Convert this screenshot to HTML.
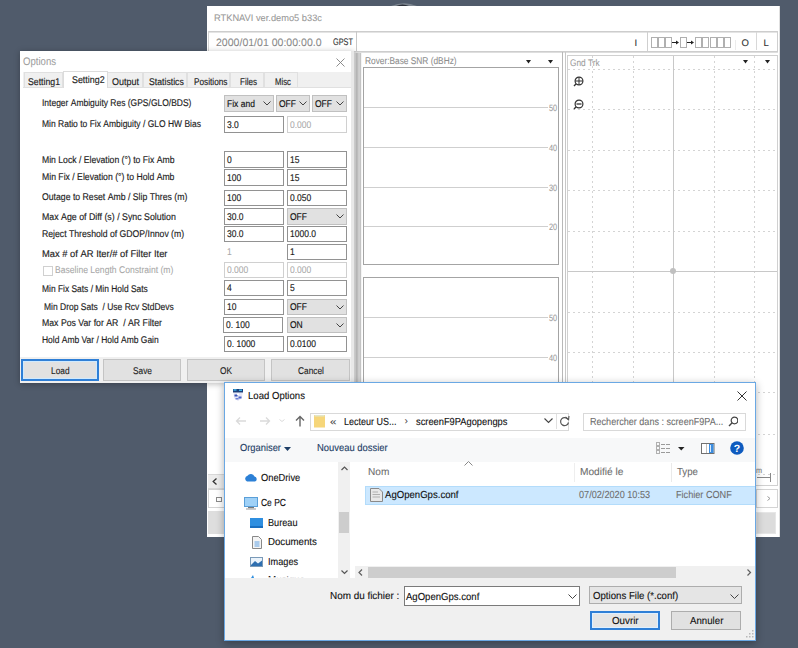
<!DOCTYPE html>
<html><head><meta charset="utf-8"><style>
html,body{margin:0;padding:0;}
body{width:798px;height:648px;overflow:hidden;position:relative;background:#505b6b;font-family:"Liberation Sans",sans-serif;text-rendering:geometricPrecision;}
body>div,body>svg{position:absolute;}
.t{white-space:nowrap;}
</style></head><body>
<div style="left:207px;top:6px;width:573px;height:531px;background:#ffffff;"></div>
<svg style="left:390px;top:1.3px;" width="28" height="5" viewBox="0 0 28 5"><path d="M1 5 Q14 -0.5 27 5Z" fill="#7d8690"/><path d="M6 5 Q12.5 1.8 19 5Z" fill="#2b303a"/></svg>
<div class="t" style="left:214px;top:14.33px;font-size:9.3px;line-height:9.3px;color:#999;transform:scaleX(0.9981);transform-origin:0 0;-webkit-text-stroke:0.08px #999;">RTKNAVI&nbsp;ver.demo5&nbsp;b33c</div>
<div style="left:208px;top:31px;width:570px;height:1px;background:#cdcdcd;"></div>
<div style="left:208px;top:32px;width:570px;height:1px;background:#e4e4e4;"></div>
<div style="left:208px;top:51px;width:570px;height:1px;background:#cdcdcd;"></div>
<div style="left:208px;top:52px;width:570px;height:1px;background:#dedede;"></div>
<div style="left:208px;top:31px;width:1px;height:20px;background:#d4d4d4;"></div>
<div style="left:356px;top:31px;width:1px;height:20px;background:#c8c8c8;"></div>
<div class="t" style="left:216px;top:38.23px;font-size:10.6px;line-height:10.6px;color:#8a8a8a;transform:scaleX(0.9953);transform-origin:0 0;-webkit-text-stroke:0.08px #8a8a8a;">2000/01/01&nbsp;00:00:00.0</div>
<div class="t" style="left:332.7px;top:38.16px;font-size:9.5px;line-height:9.5px;color:#333;transform:scaleX(0.7732);transform-origin:0 0;-webkit-text-stroke:0.12px #333;">GPST</div>
<div style="left:647px;top:31px;width:1px;height:20px;background:#cfcfcf;"></div>
<div style="left:777px;top:31px;width:1px;height:20px;background:#cfcfcf;"></div>
<div class="t" style="left:634.5px;top:38.66px;font-size:9.5px;line-height:9.5px;color:#333;-webkit-text-stroke:0.12px #333;font-family:"Liberation Mono";">I</div>
<svg style="left:651px;top:37px;" width="82" height="12" viewBox="0 0 82 12"><rect x="0.5" y="0.5" width="6" height="10" fill="none" stroke="#b0b0b0" stroke-width="1"/><rect x="7.5" y="0.5" width="6" height="10" fill="none" stroke="#b0b0b0" stroke-width="1"/><rect x="14.5" y="0.5" width="6" height="10" fill="none" stroke="#b0b0b0" stroke-width="1"/><path d="M21 5.5 H27" stroke="#222" stroke-width="1"/><path d="M25 3.5 L28 5.5 L25 7.5Z" fill="#222"/><rect x="29.5" y="0.5" width="6" height="10" fill="none" stroke="#b0b0b0" stroke-width="1"/><path d="M36 5.5 H42" stroke="#222" stroke-width="1"/><path d="M40 3.5 L43 5.5 L40 7.5Z" fill="#222"/><rect x="44.5" y="0.5" width="6" height="10" fill="none" stroke="#b0b0b0" stroke-width="1"/><rect x="51.5" y="0.5" width="6" height="10" fill="none" stroke="#b0b0b0" stroke-width="1"/><rect x="59.5" y="0.5" width="6" height="10" fill="none" stroke="#b0b0b0" stroke-width="1"/><rect x="66.5" y="0.5" width="6" height="10" fill="none" stroke="#b0b0b0" stroke-width="1"/><rect x="73.5" y="0.5" width="6" height="10" fill="none" stroke="#b0b0b0" stroke-width="1"/></svg>
<div style="left:735px;top:40px;width:1px;height:10px;background:#ececec;"></div>
<div style="left:756px;top:32px;width:1px;height:18px;background:#d8d8d8;"></div>
<div class="t" style="left:741.5px;top:38.66px;font-size:9.5px;line-height:9.5px;color:#333;-webkit-text-stroke:0.12px #333;">O</div>
<div class="t" style="left:763.5px;top:38.66px;font-size:9.5px;line-height:9.5px;color:#333;-webkit-text-stroke:0.12px #333;">L</div>
<div style="left:562px;top:52px;width:1px;height:485px;background:#b8b8b8;"></div>
<div style="left:565px;top:52px;width:1px;height:485px;background:#c8c8c8;"></div>
<div class="t" style="left:365px;top:56.90px;font-size:9.8px;line-height:9.8px;color:#8c8c8c;transform:scaleX(0.8495);transform-origin:0 0;-webkit-text-stroke:0.08px #8c8c8c;">Rover:Base&nbsp;SNR&nbsp;(dBHz)</div>
<svg style="left:526px;top:59.5px;" width="6" height="4" viewBox="0 0 6 4"><path d="M0 0 H5 L2.5 3.5Z" fill="#222"/></svg>
<svg style="left:548px;top:59.5px;" width="6" height="4" viewBox="0 0 6 4"><path d="M0 0 H5 L2.5 3.5Z" fill="#222"/></svg>
<div style="left:363px;top:67px;width:196px;height:198px;border:1px solid #a4a4a4;box-sizing:border-box;"></div>
<div style="left:364px;top:107px;width:184px;height:1px;background:#cfcfcf;"></div>
<div class="t" style="left:548.5px;top:104.41px;font-size:9.2px;line-height:9.2px;color:#9a9a9a;transform:scaleX(0.8013);transform-origin:0 0;-webkit-text-stroke:0.08px #9a9a9a;">50</div>
<div style="left:364px;top:147px;width:184px;height:1px;background:#cfcfcf;"></div>
<div class="t" style="left:548.5px;top:144.41px;font-size:9.2px;line-height:9.2px;color:#9a9a9a;transform:scaleX(0.8013);transform-origin:0 0;-webkit-text-stroke:0.08px #9a9a9a;">40</div>
<div style="left:364px;top:187px;width:184px;height:1px;background:#cfcfcf;"></div>
<div class="t" style="left:548.5px;top:184.41px;font-size:9.2px;line-height:9.2px;color:#9a9a9a;transform:scaleX(0.8013);transform-origin:0 0;-webkit-text-stroke:0.08px #9a9a9a;">30</div>
<div style="left:364px;top:226px;width:184px;height:1px;background:#cfcfcf;"></div>
<div class="t" style="left:548.5px;top:223.41px;font-size:9.2px;line-height:9.2px;color:#9a9a9a;transform:scaleX(0.8013);transform-origin:0 0;-webkit-text-stroke:0.08px #9a9a9a;">20</div>
<div style="left:363px;top:277px;width:196px;height:143px;border:1px solid #a4a4a4;box-sizing:border-box;"></div>
<div style="left:364px;top:317px;width:184px;height:1px;background:#cfcfcf;"></div>
<div class="t" style="left:548.5px;top:314.41px;font-size:9.2px;line-height:9.2px;color:#9a9a9a;transform:scaleX(0.8013);transform-origin:0 0;-webkit-text-stroke:0.08px #9a9a9a;">50</div>
<div style="left:364px;top:357px;width:184px;height:1px;background:#cfcfcf;"></div>
<div class="t" style="left:548.5px;top:354.41px;font-size:9.2px;line-height:9.2px;color:#9a9a9a;transform:scaleX(0.8013);transform-origin:0 0;-webkit-text-stroke:0.08px #9a9a9a;">40</div>
<div style="left:567px;top:55px;width:211px;height:431px;border:1px solid #d0d0d0;box-sizing:border-box;"></div>
<div style="left:592px;top:56px;width:1px;height:429px;background:repeating-linear-gradient(180deg,#d4d4d4 0 2px,transparent 2px 5px)"></div>
<div style="left:633px;top:56px;width:1px;height:429px;background:repeating-linear-gradient(180deg,#d4d4d4 0 2px,transparent 2px 5px)"></div>
<div style="left:714px;top:56px;width:1px;height:429px;background:repeating-linear-gradient(180deg,#d4d4d4 0 2px,transparent 2px 5px)"></div>
<div style="left:754px;top:56px;width:1px;height:429px;background:repeating-linear-gradient(180deg,#d4d4d4 0 2px,transparent 2px 5px)"></div>
<div style="left:568px;top:69px;width:209px;height:1px;background:repeating-linear-gradient(90deg,#d4d4d4 0 2px,transparent 2px 5px)"></div>
<div style="left:568px;top:109px;width:209px;height:1px;background:repeating-linear-gradient(90deg,#d4d4d4 0 2px,transparent 2px 5px)"></div>
<div style="left:568px;top:150px;width:209px;height:1px;background:repeating-linear-gradient(90deg,#d4d4d4 0 2px,transparent 2px 5px)"></div>
<div style="left:568px;top:190px;width:209px;height:1px;background:repeating-linear-gradient(90deg,#d4d4d4 0 2px,transparent 2px 5px)"></div>
<div style="left:568px;top:231px;width:209px;height:1px;background:repeating-linear-gradient(90deg,#d4d4d4 0 2px,transparent 2px 5px)"></div>
<div style="left:568px;top:312px;width:209px;height:1px;background:repeating-linear-gradient(90deg,#d4d4d4 0 2px,transparent 2px 5px)"></div>
<div style="left:568px;top:352px;width:209px;height:1px;background:repeating-linear-gradient(90deg,#d4d4d4 0 2px,transparent 2px 5px)"></div>
<div style="left:568px;top:392px;width:209px;height:1px;background:repeating-linear-gradient(90deg,#d4d4d4 0 2px,transparent 2px 5px)"></div>
<div style="left:568px;top:434px;width:209px;height:1px;background:repeating-linear-gradient(90deg,#d4d4d4 0 2px,transparent 2px 5px)"></div>
<div style="left:568px;top:474px;width:209px;height:1px;background:repeating-linear-gradient(90deg,#d4d4d4 0 2px,transparent 2px 5px)"></div>
<div style="left:673px;top:56px;width:1px;height:429px;background:#c8c8c8;"></div>
<div style="left:568px;top:271px;width:209px;height:1px;background:#c8c8c8;"></div>
<div style="left:670px;top:268px;width:6px;height:6px;border-radius:3px;background:#c0c0c0"></div>
<div class="t" style="left:570px;top:59.07px;font-size:9.6px;line-height:9.6px;color:#9c9c9c;transform:scaleX(0.8640);transform-origin:0 0;-webkit-text-stroke:0.08px #9c9c9c;">Gnd&nbsp;Trk</div>
<svg style="left:743px;top:59.5px;" width="6" height="4" viewBox="0 0 6 4"><path d="M0 0 H5 L2.5 3.5Z" fill="#222"/></svg>
<svg style="left:765px;top:59.5px;" width="6" height="4" viewBox="0 0 6 4"><path d="M0 0 H5 L2.5 3.5Z" fill="#222"/></svg>
<svg style="left:571px;top:75px;" width="14" height="14" viewBox="0 0 14 14"><circle cx="8" cy="6" r="3.9" fill="none" stroke="#333" stroke-width="1.2"/><path d="M5.2 8.8 L3 11" stroke="#333" stroke-width="1.4"/><path d="M4.3 6 H11.7 M8 2.3 V9.7" stroke="#333" stroke-width="1"/></svg>
<svg style="left:571px;top:97.5px;" width="14" height="14" viewBox="0 0 14 14"><circle cx="8" cy="6" r="3.9" fill="none" stroke="#333" stroke-width="1.2"/><path d="M5.2 8.8 L3 11" stroke="#333" stroke-width="1.4"/><path d="M5.5 6 H10.5" stroke="#333" stroke-width="1.3"/></svg>
<div class="t" style="left:756px;top:467.13px;font-size:8px;line-height:8px;color:#777;transform:scaleX(0.9003);transform-origin:0 0;-webkit-text-stroke:0.08px #777;">m</div>
<div style="left:757px;top:477px;width:14px;height:1px;background:#888;"></div>
<div style="left:770px;top:473px;width:1px;height:9px;background:#888;"></div>
<div style="left:779px;top:6px;width:1px;height:531px;background:#e0e0e0;"></div>
<div style="left:208px;top:474px;width:16px;height:15px;background:#ececec;border:1px solid #d8d8d8;box-sizing:border-box;border-left:none;border-right:none;"></div>
<svg style="left:212px;top:478px;" width="6" height="7" viewBox="0 0 6 7"><path d="M4.5 0.5 L1.2 3.5 L4.5 6.5" fill="none" stroke="#333" stroke-width="1.3"/></svg>
<div style="left:208px;top:489px;width:16px;height:19px;background:#fff;border:1px solid #d4d4d4;box-sizing:border-box;border-right:none;"></div>
<div style="left:216px;top:497px;width:6px;height:5px;border:1px solid #8a8a8a;box-sizing:border-box;"></div>
<div style="left:208px;top:511px;width:16px;height:23px;background:#dedede;"></div>
<div style="left:756px;top:489px;width:22px;height:19px;background:#fff;border:1px solid #d4d4d4;box-sizing:border-box;"></div>
<svg style="left:767px;top:496px;" width="4" height="5" viewBox="0 0 4 5"><path d="M0.5 0.5 L3 2.5 L0.5 4.5" fill="none" stroke="#999" stroke-width="1"/></svg>
<div style="left:756px;top:511.5px;width:20px;height:22.5px;background:#dcdcdc;border:1px solid #e6e6e6;box-sizing:border-box;"></div>
<div style="left:20px;top:51px;width:334px;height:332px;background:#ffffff;box-shadow:0 1px 6px rgba(0,0,0,0.28);"></div>
<div style="left:20px;top:357px;width:334px;height:26px;background:#f0f0f0;"></div>
<div style="left:351px;top:51px;width:3px;height:332px;background:#e8e8e8;"></div>
<div style="left:354px;top:53px;width:1px;height:484px;background:#cacaca;"></div>
<div style="left:355px;top:53px;width:1px;height:484px;background:#c4c4c4;"></div>
<div style="left:356px;top:53px;width:1px;height:484px;background:#b4b4b4;"></div>
<div style="left:357px;top:53px;width:1px;height:484px;background:#bcbcbc;"></div>
<div style="left:358px;top:53px;width:1px;height:484px;background:#cccccc;"></div>
<div style="left:359px;top:53px;width:1px;height:484px;background:#d0d0d0;"></div>
<div style="left:360px;top:53px;width:1px;height:484px;background:#c4c4c4;"></div>
<div style="left:361px;top:53px;width:1px;height:484px;background:#f4f4f4;"></div>
<div class="t" style="left:23px;top:56.89px;font-size:11px;line-height:11px;color:#a0a0a0;transform:scaleX(0.8705);transform-origin:0 0;-webkit-text-stroke:0.08px #a0a0a0;">Options</div>
<svg style="left:336px;top:58px;" width="9" height="9" viewBox="0 0 9 9"><path d="M0.5 0.5 L8.5 8.5 M8.5 0.5 L0.5 8.5" stroke="#808080" stroke-width="0.9"/></svg>
<div style="left:23px;top:72px;width:328px;height:16px;background:#f0f0f0;"></div>
<div style="left:23px;top:87px;width:328px;height:1px;background:#e0e0e0;"></div>
<div style="left:24px;top:72px;width:39px;height:16px;background:#f0f0f0;border:1px solid #e0e0e0;box-sizing:border-box;"></div>
<div class="t" style="left:28px;top:77.90px;font-size:9.8px;line-height:9.8px;color:#222;transform:scaleX(0.8899);transform-origin:0 0;-webkit-text-stroke:0.15px #222;">Setting1</div>
<div style="left:107px;top:72px;width:36px;height:16px;background:#f0f0f0;border:1px solid #e0e0e0;box-sizing:border-box;"></div>
<div class="t" style="left:112px;top:77.90px;font-size:9.8px;line-height:9.8px;color:#222;transform:scaleX(0.9178);transform-origin:0 0;-webkit-text-stroke:0.15px #222;">Output</div>
<div style="left:143px;top:72px;width:44px;height:16px;background:#f0f0f0;border:1px solid #e0e0e0;box-sizing:border-box;"></div>
<div class="t" style="left:149px;top:77.90px;font-size:9.8px;line-height:9.8px;color:#222;transform:scaleX(0.8875);transform-origin:0 0;-webkit-text-stroke:0.15px #222;">Statistics</div>
<div style="left:187px;top:72px;width:43px;height:16px;background:#f0f0f0;border:1px solid #e0e0e0;box-sizing:border-box;"></div>
<div class="t" style="left:193.5px;top:77.90px;font-size:9.8px;line-height:9.8px;color:#222;transform:scaleX(0.8425);transform-origin:0 0;-webkit-text-stroke:0.15px #222;">Positions</div>
<div style="left:230px;top:72px;width:34px;height:16px;background:#f0f0f0;border:1px solid #e0e0e0;box-sizing:border-box;"></div>
<div class="t" style="left:240px;top:77.90px;font-size:9.8px;line-height:9.8px;color:#222;transform:scaleX(0.8216);transform-origin:0 0;-webkit-text-stroke:0.15px #222;">Files</div>
<div style="left:264px;top:72px;width:34px;height:16px;background:#f0f0f0;border:1px solid #e0e0e0;box-sizing:border-box;"></div>
<div class="t" style="left:275px;top:77.90px;font-size:9.8px;line-height:9.8px;color:#222;transform:scaleX(0.7944);transform-origin:0 0;-webkit-text-stroke:0.15px #222;">Misc</div>
<div style="left:63px;top:71px;width:45px;height:17px;background:#ffffff;border:1px solid #dcdcdc;box-sizing:border-box;border-bottom:none;"></div>
<div class="t" style="left:71.6px;top:76.40px;font-size:9.8px;line-height:9.8px;color:#222;transform:scaleX(0.9065);transform-origin:0 0;-webkit-text-stroke:0.15px #222;">Setting2</div>
<div class="t" style="left:42px;top:99.40px;font-size:9.8px;line-height:9.8px;color:#222;transform:scaleX(0.8657);transform-origin:0 0;-webkit-text-stroke:0.15px #222;">Integer&nbsp;Ambiguity&nbsp;Res&nbsp;(GPS/GLO/BDS)</div>
<div class="t" style="left:42px;top:120.40px;font-size:9.8px;line-height:9.8px;color:#222;transform:scaleX(0.8662);transform-origin:0 0;-webkit-text-stroke:0.15px #222;">Min&nbsp;Ratio&nbsp;to&nbsp;Fix&nbsp;Ambiguity&nbsp;/&nbsp;GLO&nbsp;HW&nbsp;Bias</div>
<div class="t" style="left:42px;top:155.90px;font-size:9.8px;line-height:9.8px;color:#222;transform:scaleX(0.8807);transform-origin:0 0;-webkit-text-stroke:0.15px #222;">Min&nbsp;Lock&nbsp;/&nbsp;Elevation&nbsp;(°)&nbsp;to&nbsp;Fix&nbsp;Amb</div>
<div class="t" style="left:42px;top:173.40px;font-size:9.8px;line-height:9.8px;color:#222;transform:scaleX(0.8839);transform-origin:0 0;-webkit-text-stroke:0.15px #222;">Min&nbsp;Fix&nbsp;/&nbsp;Elevation&nbsp;(°)&nbsp;to&nbsp;Hold&nbsp;Amb</div>
<div class="t" style="left:42px;top:193.40px;font-size:9.8px;line-height:9.8px;color:#222;transform:scaleX(0.8865);transform-origin:0 0;-webkit-text-stroke:0.15px #222;">Outage&nbsp;to&nbsp;Reset&nbsp;Amb&nbsp;/&nbsp;Slip&nbsp;Thres&nbsp;(m)</div>
<div class="t" style="left:42px;top:212.90px;font-size:9.8px;line-height:9.8px;color:#222;transform:scaleX(0.8982);transform-origin:0 0;-webkit-text-stroke:0.15px #222;">Max&nbsp;Age&nbsp;of&nbsp;Diff&nbsp;(s)&nbsp;/&nbsp;Sync&nbsp;Solution</div>
<div class="t" style="left:42px;top:230.40px;font-size:9.8px;line-height:9.8px;color:#222;transform:scaleX(0.8848);transform-origin:0 0;-webkit-text-stroke:0.15px #222;">Reject&nbsp;Threshold&nbsp;of&nbsp;GDOP/Innov&nbsp;(m)</div>
<div class="t" style="left:42px;top:249.50px;font-size:9.8px;line-height:9.8px;color:#222;transform:scaleX(0.9563);transform-origin:0 0;-webkit-text-stroke:0.15px #222;">Max&nbsp;#&nbsp;of&nbsp;AR&nbsp;Iter/#&nbsp;of&nbsp;Filter&nbsp;Iter</div>
<div class="t" style="left:42px;top:284.70px;font-size:9.8px;line-height:9.8px;color:#222;transform:scaleX(0.8596);transform-origin:0 0;-webkit-text-stroke:0.15px #222;">Min&nbsp;Fix&nbsp;Sats&nbsp;/&nbsp;Min&nbsp;Hold&nbsp;Sats</div>
<div class="t" style="left:43.8px;top:302.90px;font-size:9.8px;line-height:9.8px;color:#222;transform:scaleX(0.8667);transform-origin:0 0;-webkit-text-stroke:0.15px #222;">Min&nbsp;Drop&nbsp;Sats&nbsp;&nbsp;/&nbsp;Use&nbsp;Rcv&nbsp;StdDevs</div>
<div class="t" style="left:42px;top:318.90px;font-size:9.8px;line-height:9.8px;color:#222;transform:scaleX(0.8895);transform-origin:0 0;-webkit-text-stroke:0.15px #222;">Max&nbsp;Pos&nbsp;Var&nbsp;for&nbsp;AR&nbsp;&nbsp;/&nbsp;AR&nbsp;Filter</div>
<div class="t" style="left:42px;top:336.40px;font-size:9.8px;line-height:9.8px;color:#222;transform:scaleX(0.8654);transform-origin:0 0;-webkit-text-stroke:0.15px #222;">Hold&nbsp;Amb&nbsp;Var&nbsp;/&nbsp;Hold&nbsp;Amb&nbsp;Gain</div>
<div style="left:43px;top:266px;width:10px;height:10px;border:1px solid #d0d0d0;box-sizing:border-box;"></div>
<div class="t" style="left:55px;top:266.40px;font-size:9.8px;line-height:9.8px;color:#a8a8a8;transform:scaleX(0.8764);transform-origin:0 0;-webkit-text-stroke:0.08px #a8a8a8;">Baseline&nbsp;Length&nbsp;Constraint&nbsp;(m)</div>
<div style="left:224px;top:95px;width:50px;height:17px;background:#e1e1e1;border:1px solid #c0c0c0;box-sizing:border-box;"></div>
<div class="t" style="left:226.5px;top:100.30px;font-size:9.8px;line-height:9.8px;color:#111;transform:scaleX(0.8673);transform-origin:0 0;-webkit-text-stroke:0.15px #111;">Fix&nbsp;and</div>
<svg style="left:263px;top:101.0px;" width="8" height="5" viewBox="0 0 8 5"><path d="M0.5 0.5 L4 4 L7.5 0.5" fill="none" stroke="#444" stroke-width="1"/></svg>
<div style="left:276px;top:95px;width:34px;height:17px;background:#e1e1e1;border:1px solid #c0c0c0;box-sizing:border-box;"></div>
<div class="t" style="left:278.5px;top:100.30px;font-size:9.8px;line-height:9.8px;color:#111;transform:scaleX(0.8673);transform-origin:0 0;-webkit-text-stroke:0.15px #111;">OFF</div>
<svg style="left:299px;top:101.0px;" width="8" height="5" viewBox="0 0 8 5"><path d="M0.5 0.5 L4 4 L7.5 0.5" fill="none" stroke="#444" stroke-width="1"/></svg>
<div style="left:312px;top:95px;width:35px;height:17px;background:#e1e1e1;border:1px solid #c0c0c0;box-sizing:border-box;"></div>
<div class="t" style="left:314.5px;top:100.30px;font-size:9.8px;line-height:9.8px;color:#111;transform:scaleX(0.8673);transform-origin:0 0;-webkit-text-stroke:0.15px #111;">OFF</div>
<svg style="left:336px;top:101.0px;" width="8" height="5" viewBox="0 0 8 5"><path d="M0.5 0.5 L4 4 L7.5 0.5" fill="none" stroke="#444" stroke-width="1"/></svg>
<div style="left:224px;top:116px;width:60px;height:17px;background:#fff;border:1px solid #929292;box-sizing:border-box;"></div>
<div class="t" style="left:226.5px;top:121.30px;font-size:9.8px;line-height:9.8px;color:#1a1a1a;transform:scaleX(0.8673);transform-origin:0 0;-webkit-text-stroke:0.15px #1a1a1a;">3.0</div>
<div style="left:287px;top:116px;width:60px;height:17px;background:#fff;border:1px solid #d0d0d0;box-sizing:border-box;"></div>
<div class="t" style="left:289.5px;top:121.30px;font-size:9.8px;line-height:9.8px;color:#a8a8a8;transform:scaleX(0.8673);transform-origin:0 0;-webkit-text-stroke:0.05px #a8a8a8;">0.000</div>
<div style="left:224px;top:151px;width:60px;height:17px;background:#fff;border:1px solid #929292;box-sizing:border-box;"></div>
<div class="t" style="left:226.5px;top:156.30px;font-size:9.8px;line-height:9.8px;color:#1a1a1a;transform:scaleX(0.8673);transform-origin:0 0;-webkit-text-stroke:0.15px #1a1a1a;">0</div>
<div style="left:287px;top:151px;width:60px;height:17px;background:#fff;border:1px solid #929292;box-sizing:border-box;"></div>
<div class="t" style="left:289.5px;top:156.30px;font-size:9.8px;line-height:9.8px;color:#1a1a1a;transform:scaleX(0.8673);transform-origin:0 0;-webkit-text-stroke:0.15px #1a1a1a;">15</div>
<div style="left:224px;top:169px;width:60px;height:17px;background:#fff;border:1px solid #929292;box-sizing:border-box;"></div>
<div class="t" style="left:226.5px;top:174.30px;font-size:9.8px;line-height:9.8px;color:#1a1a1a;transform:scaleX(0.8673);transform-origin:0 0;-webkit-text-stroke:0.15px #1a1a1a;">100</div>
<div style="left:287px;top:169px;width:60px;height:17px;background:#fff;border:1px solid #929292;box-sizing:border-box;"></div>
<div class="t" style="left:289.5px;top:174.30px;font-size:9.8px;line-height:9.8px;color:#1a1a1a;transform:scaleX(0.8673);transform-origin:0 0;-webkit-text-stroke:0.15px #1a1a1a;">15</div>
<div style="left:224px;top:190px;width:60px;height:16px;background:#fff;border:1px solid #929292;box-sizing:border-box;"></div>
<div class="t" style="left:226.5px;top:194.30px;font-size:9.8px;line-height:9.8px;color:#1a1a1a;transform:scaleX(0.8673);transform-origin:0 0;-webkit-text-stroke:0.15px #1a1a1a;">100</div>
<div style="left:287px;top:190px;width:60px;height:16px;background:#fff;border:1px solid #929292;box-sizing:border-box;"></div>
<div class="t" style="left:289.5px;top:194.30px;font-size:9.8px;line-height:9.8px;color:#1a1a1a;transform:scaleX(0.8673);transform-origin:0 0;-webkit-text-stroke:0.15px #1a1a1a;">0.050</div>
<div style="left:224px;top:226px;width:60px;height:16px;background:#fff;border:1px solid #929292;box-sizing:border-box;"></div>
<div class="t" style="left:226.5px;top:230.30px;font-size:9.8px;line-height:9.8px;color:#1a1a1a;transform:scaleX(0.8673);transform-origin:0 0;-webkit-text-stroke:0.15px #1a1a1a;">30.0</div>
<div style="left:287px;top:226px;width:60px;height:16px;background:#fff;border:1px solid #929292;box-sizing:border-box;"></div>
<div class="t" style="left:289.5px;top:230.30px;font-size:9.8px;line-height:9.8px;color:#1a1a1a;transform:scaleX(0.8673);transform-origin:0 0;-webkit-text-stroke:0.15px #1a1a1a;">1000.0</div>
<div style="left:224px;top:280px;width:60px;height:16px;background:#fff;border:1px solid #929292;box-sizing:border-box;"></div>
<div class="t" style="left:226.5px;top:284.30px;font-size:9.8px;line-height:9.8px;color:#1a1a1a;transform:scaleX(0.8673);transform-origin:0 0;-webkit-text-stroke:0.15px #1a1a1a;">4</div>
<div style="left:287px;top:280px;width:60px;height:16px;background:#fff;border:1px solid #929292;box-sizing:border-box;"></div>
<div class="t" style="left:289.5px;top:284.30px;font-size:9.8px;line-height:9.8px;color:#1a1a1a;transform:scaleX(0.8673);transform-origin:0 0;-webkit-text-stroke:0.15px #1a1a1a;">5</div>
<div style="left:224px;top:336px;width:60px;height:16px;background:#fff;border:1px solid #929292;box-sizing:border-box;"></div>
<div class="t" style="left:226.5px;top:340.30px;font-size:9.8px;line-height:9.8px;color:#1a1a1a;transform:scaleX(0.8673);transform-origin:0 0;-webkit-text-stroke:0.15px #1a1a1a;">0.&nbsp;1000</div>
<div style="left:287px;top:336px;width:60px;height:16px;background:#fff;border:1px solid #929292;box-sizing:border-box;"></div>
<div class="t" style="left:289.5px;top:340.30px;font-size:9.8px;line-height:9.8px;color:#1a1a1a;transform:scaleX(0.8673);transform-origin:0 0;-webkit-text-stroke:0.15px #1a1a1a;">0.0100</div>
<div style="left:224px;top:208px;width:60px;height:17px;background:#fff;border:1px solid #929292;box-sizing:border-box;"></div>
<div class="t" style="left:226.5px;top:213.30px;font-size:9.8px;line-height:9.8px;color:#1a1a1a;transform:scaleX(0.8673);transform-origin:0 0;-webkit-text-stroke:0.15px #1a1a1a;">30.0</div>
<div style="left:287px;top:208px;width:60px;height:17px;background:#e1e1e1;border:1px solid #c0c0c0;box-sizing:border-box;"></div>
<div class="t" style="left:289.5px;top:213.30px;font-size:9.8px;line-height:9.8px;color:#111;transform:scaleX(0.8673);transform-origin:0 0;-webkit-text-stroke:0.15px #111;">OFF</div>
<svg style="left:336px;top:214.0px;" width="8" height="5" viewBox="0 0 8 5"><path d="M0.5 0.5 L4 4 L7.5 0.5" fill="none" stroke="#444" stroke-width="1"/></svg>
<div class="t" style="left:226.5px;top:248.30px;font-size:9.8px;line-height:9.8px;color:#a8a8a8;transform:scaleX(0.8673);transform-origin:0 0;-webkit-text-stroke:0.05px #a8a8a8;">1</div>
<div style="left:287px;top:244px;width:60px;height:16px;background:#fff;border:1px solid #929292;box-sizing:border-box;"></div>
<div class="t" style="left:289.5px;top:248.30px;font-size:9.8px;line-height:9.8px;color:#1a1a1a;transform:scaleX(0.8673);transform-origin:0 0;-webkit-text-stroke:0.15px #1a1a1a;">1</div>
<div style="left:224px;top:262px;width:60px;height:16px;background:#fff;border:1px solid #d0d0d0;box-sizing:border-box;"></div>
<div class="t" style="left:226.5px;top:266.30px;font-size:9.8px;line-height:9.8px;color:#a8a8a8;transform:scaleX(0.8673);transform-origin:0 0;-webkit-text-stroke:0.05px #a8a8a8;">0.000</div>
<div style="left:287px;top:262px;width:60px;height:16px;background:#fff;border:1px solid #d0d0d0;box-sizing:border-box;"></div>
<div class="t" style="left:289.5px;top:266.30px;font-size:9.8px;line-height:9.8px;color:#a8a8a8;transform:scaleX(0.8673);transform-origin:0 0;-webkit-text-stroke:0.05px #a8a8a8;">0.000</div>
<div style="left:224px;top:299px;width:60px;height:16px;background:#fff;border:1px solid #929292;box-sizing:border-box;"></div>
<div class="t" style="left:226.5px;top:303.30px;font-size:9.8px;line-height:9.8px;color:#1a1a1a;transform:scaleX(0.8673);transform-origin:0 0;-webkit-text-stroke:0.15px #1a1a1a;">10</div>
<div style="left:287px;top:299px;width:60px;height:16px;background:#e1e1e1;border:1px solid #c0c0c0;box-sizing:border-box;"></div>
<div class="t" style="left:289.5px;top:303.30px;font-size:9.8px;line-height:9.8px;color:#111;transform:scaleX(0.8673);transform-origin:0 0;-webkit-text-stroke:0.15px #111;">OFF</div>
<svg style="left:336px;top:304.5px;" width="8" height="5" viewBox="0 0 8 5"><path d="M0.5 0.5 L4 4 L7.5 0.5" fill="none" stroke="#444" stroke-width="1"/></svg>
<div style="left:223px;top:317px;width:60px;height:16px;background:#fff;border:1px solid #929292;box-sizing:border-box;"></div>
<div class="t" style="left:225.5px;top:321.30px;font-size:9.8px;line-height:9.8px;color:#1a1a1a;transform:scaleX(0.8673);transform-origin:0 0;-webkit-text-stroke:0.15px #1a1a1a;">0.&nbsp;100</div>
<div style="left:287px;top:317px;width:60px;height:16px;background:#e1e1e1;border:1px solid #c0c0c0;box-sizing:border-box;"></div>
<div class="t" style="left:289.5px;top:321.30px;font-size:9.8px;line-height:9.8px;color:#111;transform:scaleX(0.8673);transform-origin:0 0;-webkit-text-stroke:0.15px #111;">ON</div>
<svg style="left:336px;top:322.5px;" width="8" height="5" viewBox="0 0 8 5"><path d="M0.5 0.5 L4 4 L7.5 0.5" fill="none" stroke="#444" stroke-width="1"/></svg>
<div style="left:21px;top:359px;width:78px;height:22px;background:#e1e1e1;border:2px solid #2f7fd6;box-sizing:border-box;box-shadow:inset 0 0 0 1px #cfeaff;"></div>
<div class="t" style="left:50.734436875px;top:367.20px;font-size:9.8px;line-height:9.8px;color:#222;transform:scaleX(0.8500);transform-origin:0 0;-webkit-text-stroke:0.12px #222;">Load</div>
<div style="left:103px;top:359px;width:78px;height:22px;background:#e1e1e1;border:1px solid #c4c4c4;box-sizing:border-box;"></div>
<div class="t" style="left:132.5066634375px;top:367.20px;font-size:9.8px;line-height:9.8px;color:#222;transform:scaleX(0.8500);transform-origin:0 0;-webkit-text-stroke:0.12px #222;">Save</div>
<div style="left:187px;top:359px;width:78px;height:22px;background:#e1e1e1;border:1px solid #c4c4c4;box-sizing:border-box;"></div>
<div class="t" style="left:219.982290859375px;top:367.20px;font-size:9.8px;line-height:9.8px;color:#222;transform:scaleX(0.8500);transform-origin:0 0;-webkit-text-stroke:0.12px #222;">OK</div>
<div style="left:271px;top:359px;width:79px;height:22px;background:#e1e1e1;border:1px solid #c4c4c4;box-sizing:border-box;"></div>
<div class="t" style="left:297.5351359375px;top:367.20px;font-size:9.8px;line-height:9.8px;color:#222;transform:scaleX(0.8500);transform-origin:0 0;-webkit-text-stroke:0.12px #222;">Cancel</div>
<div style="left:224px;top:382px;width:532px;height:259px;background:#ffffff;border:1px solid #6aa8e4;box-sizing:border-box;box-shadow:0 2px 8px rgba(0,0,0,0.3);"></div>
<div style="left:225px;top:437.5px;width:530px;height:24.0px;background:#f7f8f9;"></div>
<div style="left:225px;top:578px;width:530px;height:62px;background:#f0f0f0;"></div>
<svg style="left:232px;top:388px;" width="12" height="14" viewBox="0 0 12 14"><rect x="1" y="1" width="10" height="3.5" fill="#1d3f7a"/><rect x="1.5" y="1.2" width="3" height="1.5" fill="#3fb6e8"/><rect x="7" y="1.5" width="3" height="1.5" fill="#3fb6e8"/><path d="M1.5 5 H10.5 L10 10 L6 13 L2 10Z" fill="#e4e6f6"/><rect x="2.5" y="6.5" width="3" height="2" fill="#3b55b8"/><rect x="6.5" y="8.5" width="3" height="2" fill="#4a63c8"/><rect x="3.5" y="10" width="3" height="1.5" fill="#6d7fd6"/><rect x="5" y="5.5" width="2" height="1.5" fill="#ffffff"/></svg>
<div class="t" style="left:247.6px;top:391.87px;font-size:10.2px;line-height:10.2px;color:#111;transform:scaleX(0.9394);transform-origin:0 0;-webkit-text-stroke:0.12px #111;">Load&nbsp;Options</div>
<svg style="left:737px;top:391px;" width="10" height="10" viewBox="0 0 10 10"><path d="M0.5 0.5 L9.5 9.5 M9.5 0.5 L0.5 9.5" stroke="#333" stroke-width="1"/></svg>
<svg style="left:235px;top:415px;" width="12" height="12" viewBox="0 0 12 12"><path d="M1.5 6 H11 M5 2.5 L1.5 6 L5 9.5" fill="none" stroke="#dadada" stroke-width="1.3"/></svg>
<svg style="left:259px;top:415px;" width="12" height="12" viewBox="0 0 12 12"><path d="M1 6 H10.5 M7 2.5 L10.5 6 L7 9.5" fill="none" stroke="#dadada" stroke-width="1.3"/></svg>
<svg style="left:279px;top:419px;" width="6" height="3" viewBox="0 0 6 3"><path d="M0.5 0.5 L3 2.5 L5.5 0.5" fill="none" stroke="#dadada" stroke-width="1"/></svg>
<svg style="left:294px;top:415px;" width="12" height="12" viewBox="0 0 12 12"><path d="M6 11.5 V1.5 M2 5.5 L6 1.5 L10 5.5" fill="none" stroke="#666" stroke-width="1.4"/></svg>
<div style="left:310px;top:412.5px;width:259px;height:18.0px;background:#fff;border:1px solid #d9d9d9;box-sizing:border-box;"></div>
<svg style="left:314px;top:415px;" width="12" height="13" viewBox="0 0 12 13"><rect x="0" y="0" width="11" height="12.5" fill="#f6d67a"/><rect x="0.5" y="0" width="10" height="1.5" fill="#e3e6c8"/></svg>
<div class="t" style="left:329.5px;top:417.31px;font-size:10.5px;line-height:10.5px;color:#444;transform:scaleX(1.1131);transform-origin:0 0;-webkit-text-stroke:0.08px #444;">«</div>
<div class="t" style="left:343.5px;top:417.57px;font-size:10.2px;line-height:10.2px;color:#111;transform:scaleX(0.8820);transform-origin:0 0;-webkit-text-stroke:0.12px #111;">Lecteur&nbsp;US...</div>
<div class="t" style="left:404.5px;top:417.07px;font-size:10.2px;line-height:10.2px;color:#444;-webkit-text-stroke:0.08px #444;">›</div>
<div class="t" style="left:415.5px;top:417.57px;font-size:10.2px;line-height:10.2px;color:#111;transform:scaleX(0.9134);transform-origin:0 0;-webkit-text-stroke:0.12px #111;">screenF9PAgopengps</div>
<svg style="left:544px;top:418px;" width="9" height="6" viewBox="0 0 9 6"><path d="M0.5 0.5 L4.5 4.5 L8.5 0.5" fill="none" stroke="#444" stroke-width="1.1"/></svg>
<div style="left:556px;top:414px;width:1px;height:15px;background:#e0e0e0;"></div>
<svg style="left:559px;top:415px;" width="12" height="12" viewBox="0 0 12 12"><path d="M9 4.5 A4 4 0 1 0 9.5 7.5" fill="none" stroke="#555" stroke-width="1.2"/><path d="M6.5 2 L9.6 4.6 L10 1" fill="none" stroke="#555" stroke-width="1.1"/></svg>
<div style="left:582.5px;top:413px;width:163.5px;height:17.5px;background:#fff;border:1px solid #d9d9d9;box-sizing:border-box;"></div>
<div class="t" style="left:589.5px;top:417.57px;font-size:10.2px;line-height:10.2px;color:#6d6d6d;transform:scaleX(0.8891);transform-origin:0 0;-webkit-text-stroke:0.08px #6d6d6d;">Rechercher&nbsp;dans&nbsp;:&nbsp;screenF9PA...</div>
<svg style="left:728px;top:416px;" width="10.2" height="11" viewBox="0 0 10.2 11"><circle cx="6.5" cy="4.5" r="3.3" fill="none" stroke="#444" stroke-width="1.2"/><path d="M4.2 6.8 L1 10" stroke="#444" stroke-width="1.4"/></svg>
<div class="t" style="left:239.6px;top:444.07px;font-size:10.2px;line-height:10.2px;color:#1e3e66;transform:scaleX(0.9155);transform-origin:0 0;-webkit-text-stroke:0.12px #1e3e66;">Organiser</div>
<svg style="left:284px;top:447px;" width="7" height="4" viewBox="0 0 7 4"><path d="M0 0 H7 L3.5 4Z" fill="#1e3e66"/></svg>
<div class="t" style="left:316.5px;top:444.07px;font-size:10.2px;line-height:10.2px;color:#1e3e66;transform:scaleX(0.9236);transform-origin:0 0;-webkit-text-stroke:0.12px #1e3e66;">Nouveau&nbsp;dossier</div>
<svg style="left:656px;top:442px;" width="16" height="13" viewBox="0 0 16 13"><g fill="none" stroke="#b0b0b0" stroke-width="1"><rect x="0.5" y="0.5" width="3" height="3"/><rect x="0.5" y="4.5" width="3" height="3"/><rect x="0.5" y="8.5" width="3" height="3"/></g><g fill="#9a9a9a"><rect x="5" y="2" width="4" height="1"/><rect x="10" y="2" width="4" height="1"/><rect x="5" y="6" width="4" height="1"/><rect x="10" y="6" width="4" height="1"/><rect x="5" y="10" width="4" height="1"/><rect x="10" y="10" width="4" height="1"/></g></svg>
<svg style="left:677.5px;top:447px;" width="7" height="4" viewBox="0 0 7 4"><path d="M0 0 H6.5 L3.25 3.5Z" fill="#222"/></svg>
<svg style="left:701px;top:443px;" width="14" height="11" viewBox="0 0 14 11"><rect x="0.5" y="0.5" width="12.5" height="10" fill="#fff" stroke="#707070"/><rect x="5" y="1" width="1" height="9" fill="#c0c0c0"/><rect x="8" y="1" width="4.5" height="9" fill="#3b8de0"/><rect x="9" y="2" width="1" height="7" fill="#d6e8fa"/></svg>
<svg style="left:729.5px;top:441px;" width="14" height="14" viewBox="0 0 14 14"><circle cx="7" cy="7" r="6.8" fill="#0e5bbf"/><text x="7" y="11" font-family="Liberation Sans" font-size="10.5" font-weight="bold" fill="#fff" text-anchor="middle">?</text></svg>
<div style="left:338px;top:461.5px;width:12px;height:116.5px;background:#f0f0f0;"></div>
<div style="left:339px;top:511.5px;width:10px;height:21.5px;background:#cdcdcd;"></div>
<svg style="left:341px;top:466px;" width="7" height="5" viewBox="0 0 7 5"><path d="M0.5 4 L3.5 1 L6.5 4" fill="none" stroke="#555" stroke-width="1.2"/></svg>
<svg style="left:341px;top:569.5px;" width="7" height="5" viewBox="0 0 7 5"><path d="M0.5 0.5 L3.5 3.5 L6.5 0.5" fill="none" stroke="#555" stroke-width="1.2"/></svg>
<svg style="left:243.5px;top:473px;" width="14" height="9" viewBox="0 0 14 9"><path d="M3 8.5 A3 3 0 0 1 3.5 2.8 A4 4 0 0 1 10.5 3.5 A2.6 2.6 0 0 1 11 8.5Z" fill="#2c80d6"/></svg>
<div class="t" style="left:261.4px;top:473.87px;font-size:10.2px;line-height:10.2px;color:#111;transform:scaleX(0.9122);transform-origin:0 0;-webkit-text-stroke:0.12px #111;">OneDrive</div>
<svg style="left:243.5px;top:497px;" width="14" height="13" viewBox="0 0 14 13"><rect x="0.5" y="0.5" width="13" height="9" fill="#9fd1f7" stroke="#5a9fd8"/><rect x="4" y="10" width="6" height="1.2" fill="#777"/><rect x="2" y="11.5" width="10" height="1" fill="#999"/></svg>
<div class="t" style="left:261.4px;top:498.97px;font-size:10.2px;line-height:10.2px;color:#111;transform:scaleX(0.8322);transform-origin:0 0;-webkit-text-stroke:0.12px #111;">Ce&nbsp;PC</div>
<svg style="left:250px;top:517.5px;" width="13" height="10.2" viewBox="0 0 13 10.2"><rect x="0" y="0" width="13" height="10" fill="#2f8fe0"/><rect x="0" y="8" width="13" height="2" fill="#1a6fc0"/></svg>
<div class="t" style="left:267.6px;top:518.97px;font-size:10.2px;line-height:10.2px;color:#111;transform:scaleX(0.8999);transform-origin:0 0;-webkit-text-stroke:0.12px #111;">Bureau</div>
<svg style="left:252px;top:536px;" width="10" height="13" viewBox="0 0 10 13"><path d="M0.5 0.5 H6.5 L9.5 3.5 V12.5 H0.5Z" fill="#f4f4f4" stroke="#888"/><path d="M2.5 6 H7.5 M2.5 8 H7.5 M2.5 10 H7.5" stroke="#3b8de0" stroke-width="0.8"/></svg>
<div class="t" style="left:267.6px;top:538.27px;font-size:10.2px;line-height:10.2px;color:#111;transform:scaleX(0.9479);transform-origin:0 0;-webkit-text-stroke:0.12px #111;">Documents</div>
<svg style="left:250px;top:557px;" width="13" height="10" viewBox="0 0 13 10"><rect x="0.5" y="0.5" width="12" height="9" fill="#eaf3fb" stroke="#7a9ab8"/><path d="M1 8 L5 4 L8 6.5 L12 3.5 V9 H1Z" fill="#2f6fb0"/></svg>
<div class="t" style="left:267.6px;top:558.17px;font-size:10.2px;line-height:10.2px;color:#111;transform:scaleX(0.8999);transform-origin:0 0;-webkit-text-stroke:0.12px #111;">Images</div>
<svg style="left:250px;top:575px;" width="8" height="3" viewBox="0 0 8 3"><path d="M1 3 L3 0 L4 3Z" fill="#2f8fe0"/></svg>
<div class="t" style="left:267.6px;top:576.07px;font-size:10.2px;line-height:10.2px;color:#111;transform:scaleX(0.9597);transform-origin:0 0;-webkit-text-stroke:0.12px #111;clip-path:inset(0 0 9.1px 0);">Musique</div>
<div class="t" style="left:367.9px;top:468.17px;font-size:10.2px;line-height:10.2px;color:#6d6d6d;transform:scaleX(0.9891);transform-origin:0 0;-webkit-text-stroke:0.08px #6d6d6d;">Nom</div>
<svg style="left:464px;top:461px;" width="9" height="5" viewBox="0 0 9 5"><path d="M0.5 4.5 L4.5 0.5 L8.5 4.5" fill="none" stroke="#888" stroke-width="1"/></svg>
<div style="left:573.5px;top:463px;width:1.0px;height:19px;background:#eeeeee;"></div>
<div class="t" style="left:579.5px;top:468.17px;font-size:10.2px;line-height:10.2px;color:#6d6d6d;transform:scaleX(0.9965);transform-origin:0 0;-webkit-text-stroke:0.08px #6d6d6d;">Modifié&nbsp;le</div>
<div style="left:671px;top:463px;width:1px;height:19px;background:#eaeaea;"></div>
<div class="t" style="left:676.5px;top:468.17px;font-size:10.2px;line-height:10.2px;color:#6d6d6d;transform:scaleX(0.9496);transform-origin:0 0;-webkit-text-stroke:0.08px #6d6d6d;">Type</div>
<div style="left:365px;top:486px;width:390px;height:19px;background:#cce8ff;border:1px solid #b3dcfb;box-sizing:border-box;border-right:none;"></div>
<svg style="left:369.5px;top:488px;" width="13" height="14" viewBox="0 0 13 14"><path d="M0.5 0.5 H9 L12.5 4 V13.5 H0.5Z" fill="#e8e8e8" stroke="#8a8a8a"/><path d="M2.5 4 H8 M2.5 6.5 H10 M2.5 9 H10" stroke="#b0b0b0" stroke-width="1"/></svg>
<div class="t" style="left:384.6px;top:491.47px;font-size:10.2px;line-height:10.2px;color:#111;transform:scaleX(0.9406);transform-origin:0 0;-webkit-text-stroke:0.12px #111;">AgOpenGps.conf</div>
<div class="t" style="left:578.8px;top:491.17px;font-size:10.2px;line-height:10.2px;color:#6d6d6d;transform:scaleX(0.8966);transform-origin:0 0;-webkit-text-stroke:0.08px #6d6d6d;">07/02/2020&nbsp;10:53</div>
<div class="t" style="left:676.4px;top:491.17px;font-size:10.2px;line-height:10.2px;color:#6d6d6d;transform:scaleX(0.8952);transform-origin:0 0;-webkit-text-stroke:0.08px #6d6d6d;">Fichier&nbsp;CONF</div>
<div style="left:355px;top:566px;width:400px;height:12px;background:#f0f0f0;"></div>
<div style="left:368px;top:566.5px;width:308px;height:11.0px;background:#cdcdcd;"></div>
<svg style="left:358px;top:568.5px;" width="5" height="7" viewBox="0 0 5 7"><path d="M4 0.5 L1 3.5 L4 6.5" fill="none" stroke="#606060" stroke-width="1.2"/></svg>
<svg style="left:747px;top:568.5px;" width="5" height="7" viewBox="0 0 5 7"><path d="M0.5 0.5 L3.5 3.5 L0.5 6.5" fill="none" stroke="#606060" stroke-width="1.2"/></svg>
<div class="t" style="left:329.8px;top:592.17px;font-size:10.2px;line-height:10.2px;color:#111;transform:scaleX(0.9716);transform-origin:0 0;-webkit-text-stroke:0.12px #111;">Nom&nbsp;du&nbsp;fichier&nbsp;:</div>
<div style="left:403.5px;top:586.3px;width:176.5px;height:19.700000000000045px;background:#fff;border:1px solid #7a7a7a;box-sizing:border-box;"></div>
<div class="t" style="left:406.3px;top:593.27px;font-size:10.2px;line-height:10.2px;color:#111;transform:scaleX(0.9380);transform-origin:0 0;-webkit-text-stroke:0.12px #111;">AgOpenGps.conf</div>
<svg style="left:568px;top:594px;" width="9" height="6" viewBox="0 0 9 6"><path d="M0.5 0.5 L4.5 4.5 L8.5 0.5" fill="none" stroke="#444" stroke-width="1"/></svg>
<div style="left:589px;top:586.3px;width:153px;height:18.200000000000045px;background:#e5e5e5;border:1px solid #adadad;box-sizing:border-box;"></div>
<div class="t" style="left:592.9px;top:592.47px;font-size:10.2px;line-height:10.2px;color:#111;transform:scaleX(0.9464);transform-origin:0 0;-webkit-text-stroke:0.12px #111;">Options&nbsp;File&nbsp;(*.conf)</div>
<svg style="left:730px;top:594px;" width="9" height="6" viewBox="0 0 9 6"><path d="M0.5 0.5 L4.5 4.5 L8.5 0.5" fill="none" stroke="#444" stroke-width="1"/></svg>
<div style="left:590px;top:611px;width:70px;height:19px;background:#e5e5e5;border:2px solid #2f7fd6;box-sizing:border-box;box-shadow:inset 0 0 0 1px #dff0ff;"></div>
<div class="t" style="left:611.6px;top:616.57px;font-size:10.2px;line-height:10.2px;color:#111;transform:scaleX(0.9580);transform-origin:0 0;-webkit-text-stroke:0.12px #111;">Ouvrir</div>
<div style="left:671px;top:611px;width:70px;height:19px;background:#e1e1e1;border:1px solid #adadad;box-sizing:border-box;"></div>
<div class="t" style="left:689.5px;top:616.57px;font-size:10.2px;line-height:10.2px;color:#111;transform:scaleX(0.9500);transform-origin:0 0;-webkit-text-stroke:0.12px #111;">Annuler</div>
<svg style="left:746px;top:630px;" width="9" height="9" viewBox="0 0 9 9"><g fill="#b8b8b8"><rect x="6" y="0" width="1.5" height="1.5"/><rect x="3" y="3" width="1.5" height="1.5"/><rect x="6" y="3" width="1.5" height="1.5"/><rect x="0" y="6" width="1.5" height="1.5"/><rect x="3" y="6" width="1.5" height="1.5"/><rect x="6" y="6" width="1.5" height="1.5"/></g></svg>
</body></html>
